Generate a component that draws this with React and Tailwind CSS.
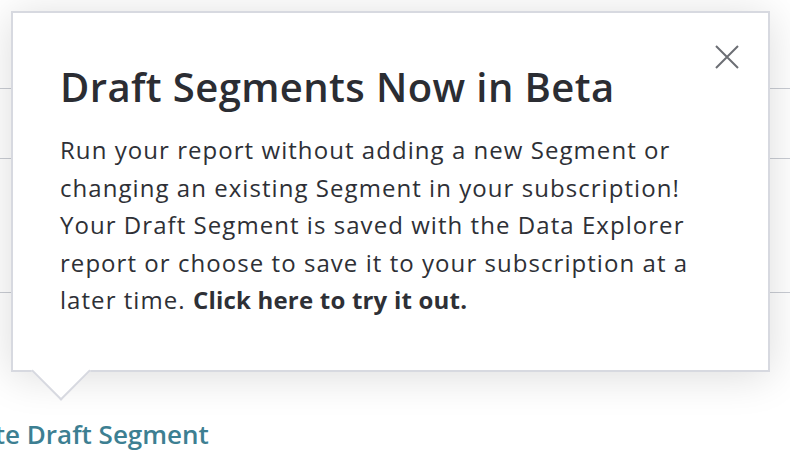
export default function App() {
    return (
        <div className="relative w-[790px] h-[466px] overflow-hidden bg-white" style={{ fontFamily: '"Open Sans", "Noto Sans", sans-serif' }}>
            <div className="flex flex-col">
                <div className="h-[89px] border-b border-[#c9ccd3]"></div>
                <div className="h-[70px] border-b border-[#c9ccd3]"></div>
                <div className="h-[134px] border-b border-[#c9ccd3]"></div>
                <div className="pt-[126px] -ml-[63px] text-[26px] font-semibold text-[#3d7f92] leading-[30px] whitespace-nowrap">
                    Create Draft Segment
                </div>
            </div>

            <div className="absolute left-[11px] top-[11px] w-[759px] h-[361px] bg-white border-2 border-[#d7d9e0] shadow-[0_4px_40px_rgba(0,0,0,0.14)]">
                <div className="flex flex-col pl-[47px] pr-[28px] pt-[31px]">
                    <div className="flex justify-end">
                        <button className="w-[26px] h-[26px] text-[#6c6e74]">
                            <svg viewBox="0 0 26 26" width="26" height="26" fill="none" stroke="currentColor" strokeWidth="2">
                                <path d="M2 2 L24 24 M24 2 L2 24" />
                            </svg>
                        </button>
                    </div>
                    <h2 className="-mt-[7px] text-[40px] font-semibold text-[#2b2d33] leading-[48px] tracking-[0.4px]">
                        Draft Segments Now in Beta
                    </h2>
                    <p className="mt-[20px] text-[24px] leading-[37.5px] text-[#2e3036] tracking-[1.05px] whitespace-nowrap">
                        Run your report without adding a new Segment or<br />
                        changing an existing Segment in your subscription!<br />
                        Your Draft Segment is saved with the Data Explorer<br />
                        report or choose to save it to your subscription at a<br />
                        later time. <span className="font-bold tracking-[0.2px] cursor-pointer">Click here to try it out.</span>
                    </p>
                </div>
                <div className="absolute left-[27px] -bottom-[22px] w-[42px] h-[42px] rotate-45 bg-white border-r-2 border-b-2 border-[#d7d9e0]"></div>
            </div>
        </div>
    );
}
